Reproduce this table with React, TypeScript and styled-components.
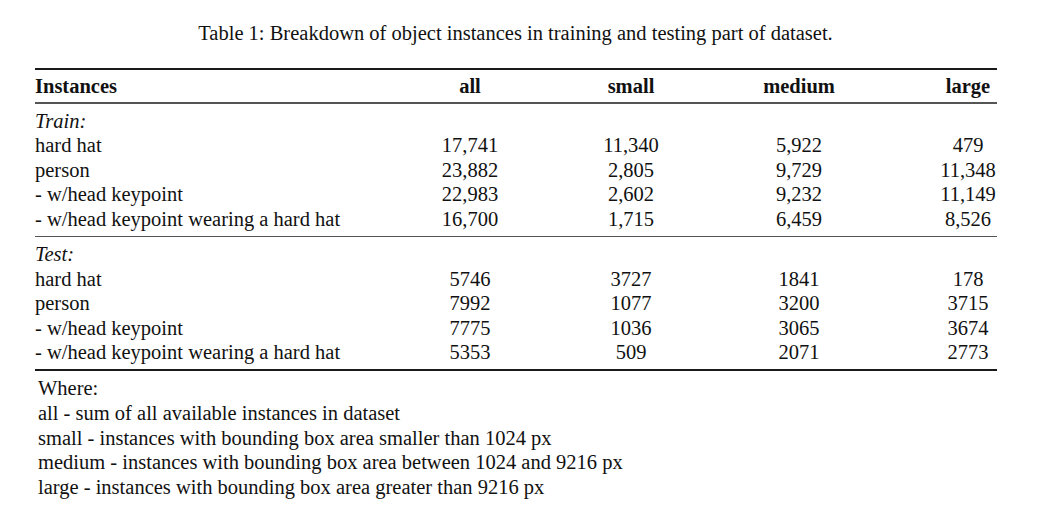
import React from "react";
import styled, { createGlobalStyle } from "styled-components";

const Global = createGlobalStyle`
  html, body { margin: 0; padding: 0; background: #ffffff; }
  body { font-family: "Liberation Serif", "Times New Roman", serif; color: #111111; }
`;

const Page = styled.div`
  width: 1037px;
  height: 512px;
  background: #ffffff;
  display: flex;
  flex-direction: column;
  box-sizing: border-box;
  padding-top: 21px;
`;

const Caption = styled.div`
  font-size: 20.5px;
  line-height: 24px;
  text-align: center;
  padding-right: 6px;
`;

const Table = styled.div`
  margin: 23px 0 0 35px;
  width: 962px;
  display: flex;
  flex-direction: column;
`;

const Rule = styled.div<{ $thick?: boolean }>`
  height: ${(p) => (p.$thick ? "2px" : "1.5px")};
  background: ${(p) => (p.$thick ? "#1a1a1a" : "#555555")};
`;

const Section = styled.div<{ $head?: boolean }>`
  padding: ${(p) => (p.$head ? "4px 0 4px" : "5px 0 4.5px")};
  display: flex;
  flex-direction: column;
`;

const Row = styled.div<{ $head?: boolean }>`
  display: grid;
  grid-template-columns: 385px 100px 61px 100px 68px 100px 90px 58px;
  font-size: 20.5px;
  line-height: ${(p) => (p.$head ? "24px" : "24.5px")};
  font-weight: ${(p) => (p.$head ? 700 : 400)};
  white-space: nowrap;
`;

const Label = styled.div<{ $italic?: boolean }>`
  grid-column: 1;
  font-style: ${(p) => (p.$italic ? "italic" : "normal")};
`;

const Num = styled.div<{ $col: number }>`
  grid-column: ${(p) => p.$col};
  text-align: center;
`;

const Notes = styled.div`
  margin: 5px 0 0 38px;
  font-size: 20.5px;
  line-height: 24.75px;
  display: flex;
  flex-direction: column;
`;

const cols = [2, 4, 6, 8];

const train: [string, string[]][] = [
  ["hard hat", ["17,741", "11,340", "5,922", "479"]],
  ["person", ["23,882", "2,805", "9,729", "11,348"]],
  ["- w/head keypoint", ["22,983", "2,602", "9,232", "11,149"]],
  ["- w/head keypoint wearing a hard hat", ["16,700", "1,715", "6,459", "8,526"]],
];

const test: [string, string[]][] = [
  ["hard hat", ["5746", "3727", "1841", "178"]],
  ["person", ["7992", "1077", "3200", "3715"]],
  ["- w/head keypoint", ["7775", "1036", "3065", "3674"]],
  ["- w/head keypoint wearing a hard hat", ["5353", "509", "2071", "2773"]],
];

const DataRows = ({ title, rows }: { title: string; rows: [string, string[]][] }) => (
  <Section>
    <Row>
      <Label $italic>{title}</Label>
    </Row>
    {rows.map(([label, vals]) => (
      <Row key={label}>
        <Label>{label}</Label>
        {vals.map((v, i) => (
          <Num key={i} $col={cols[i]}>
            {v}
          </Num>
        ))}
      </Row>
    ))}
  </Section>
);

export default function App() {
  return (
    <Page>
      <Global />
      <Caption>Table 1: Breakdown of object instances in training and testing part of dataset.</Caption>
      <Table>
        <Rule $thick />
        <Section $head>
          <Row $head>
            <Label>Instances</Label>
            {["all", "small", "medium", "large"].map((h, i) => (
              <Num key={h} $col={cols[i]}>
                {h}
              </Num>
            ))}
          </Row>
        </Section>
        <Rule />
        <DataRows title="Train:" rows={train} />
        <Rule />
        <DataRows title="Test:" rows={test} />
        <Rule $thick />
      </Table>
      <Notes>
        <span>Where:</span>
        <span>all - sum of all available instances in dataset</span>
        <span>small - instances with bounding box area smaller than 1024 px</span>
        <span>medium - instances with bounding box area between 1024 and 9216 px</span>
        <span>large - instances with bounding box area greater than 9216 px</span>
      </Notes>
    </Page>
  );
}
